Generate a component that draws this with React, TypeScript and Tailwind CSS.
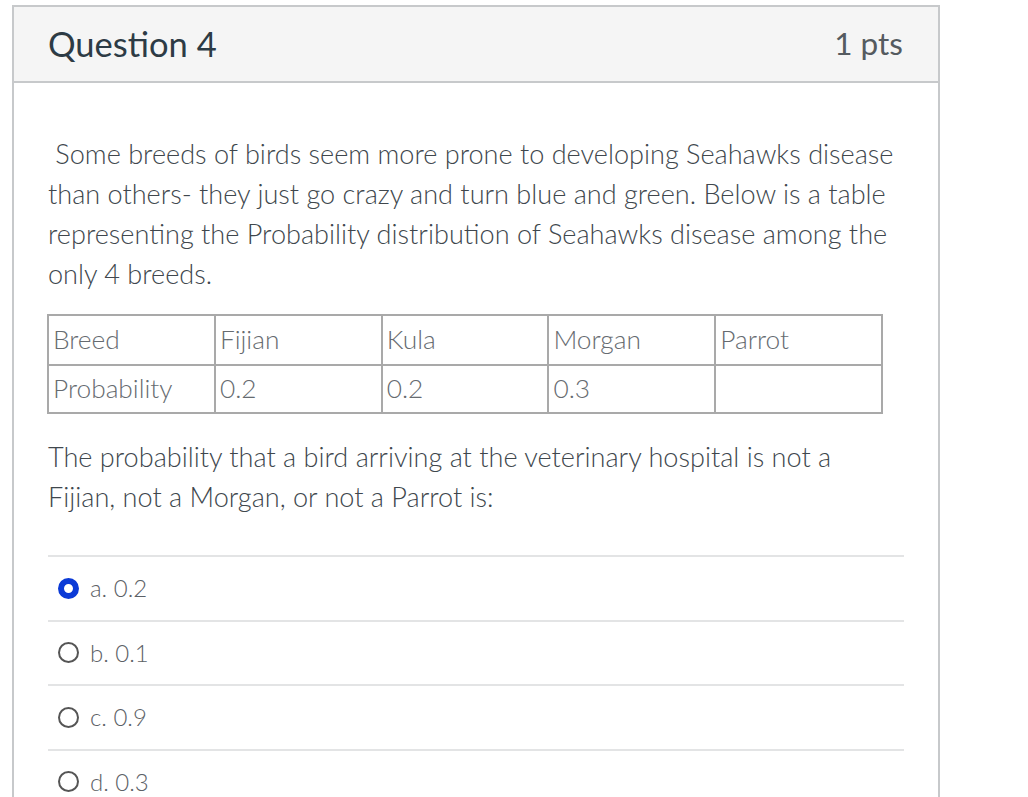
import React from 'react';

const breeds = ['Breed', 'Fijian', 'Kula', 'Morgan', 'Parrot'];
const probs = ['Probability', '0.2', '0.2', '0.3', ''];

const answers = [
  { id: 'a', label: 'a. 0.2', selected: true },
  { id: 'b', label: 'b. 0.1', selected: false },
  { id: 'c', label: 'c. 0.9', selected: false },
  { id: 'd', label: 'd. 0.3', selected: false },
];

const Radio = ({ selected }: { selected: boolean }) =>
  selected ? (
    <span className="w-[21px] h-[21px] rounded-full border-[6px] border-[#0b3ad6] bg-white shrink-0" />
  ) : (
    <span className="w-[21px] h-[21px] rounded-full border-[2.5px] border-[#555] bg-white shrink-0" />
  );

export default function App() {
  return (
    <div className="min-h-screen bg-white pl-[12px] pt-[5px] overflow-hidden" style={{ fontFamily: 'Lato, "Open Sans", sans-serif' }}>
      <div className="w-[928px] border-2 border-[#c7c9cb] border-b-0">
        <div className="h-[76px] bg-[#f5f5f5] border-b-2 border-[#c7c9cb] flex items-center justify-between pl-[34px] pr-[35px]">
          <div className="text-[34.5px] text-[#2d3b45]">Question 4</div>
          <div className="text-[31.5px] text-[#555b60]">1 pts</div>
        </div>

        <div className="px-[34px] pt-[51px] text-[#40474d] font-light">
          <p className="text-[27.1px] leading-[40px] pr-[8px]">
            &nbsp;Some breeds of birds seem more prone to developing Seahawks disease than others- they just go crazy and turn blue and green. Below is a table representing the Probability distribution of Seahawks disease among the only 4 breeds.
          </p>

          <table className="mt-[20px] w-[836px] border-collapse text-[26.3px] text-[#666b70] -ml-[1px]">
            <tbody>
              <tr className="h-[50px]">
                {breeds.map((b, i) => (
                  <td key={b} className={`w-[167px] border-2 px-[4px] align-middle ${i === 4 ? 'border-l-[#444]' : ''} border-[#a9a9a9]`}>
                    {b}
                  </td>
                ))}
              </tr>
              <tr className="h-[48px]">
                {probs.map((p, i) => (
                  <td key={i} className={`w-[167px] border-2 px-[4px] align-middle ${i === 4 ? 'border-l-[#444]' : ''} border-[#a9a9a9]`}>
                    {p}
                  </td>
                ))}
              </tr>
            </tbody>
          </table>

          <p className="mt-[23px] text-[27.1px] leading-[40px] pr-[8px]">
            The probability that a bird arriving at the veterinary hospital is not a Fijian, not a Morgan, or not a Parrot is:
          </p>

          <div className="mt-[38px]">
            {answers.map((a) => (
              <div key={a.id} className="h-[64.5px] border-t-2 border-[#e3e4e5] flex items-center gap-[11px] pl-[10px]">
                <Radio selected={a.selected} />
                <span className="text-[24px] text-[#5c6166]">{a.label}</span>
              </div>
            ))}
          </div>
        </div>
      </div>
    </div>
  );
}
